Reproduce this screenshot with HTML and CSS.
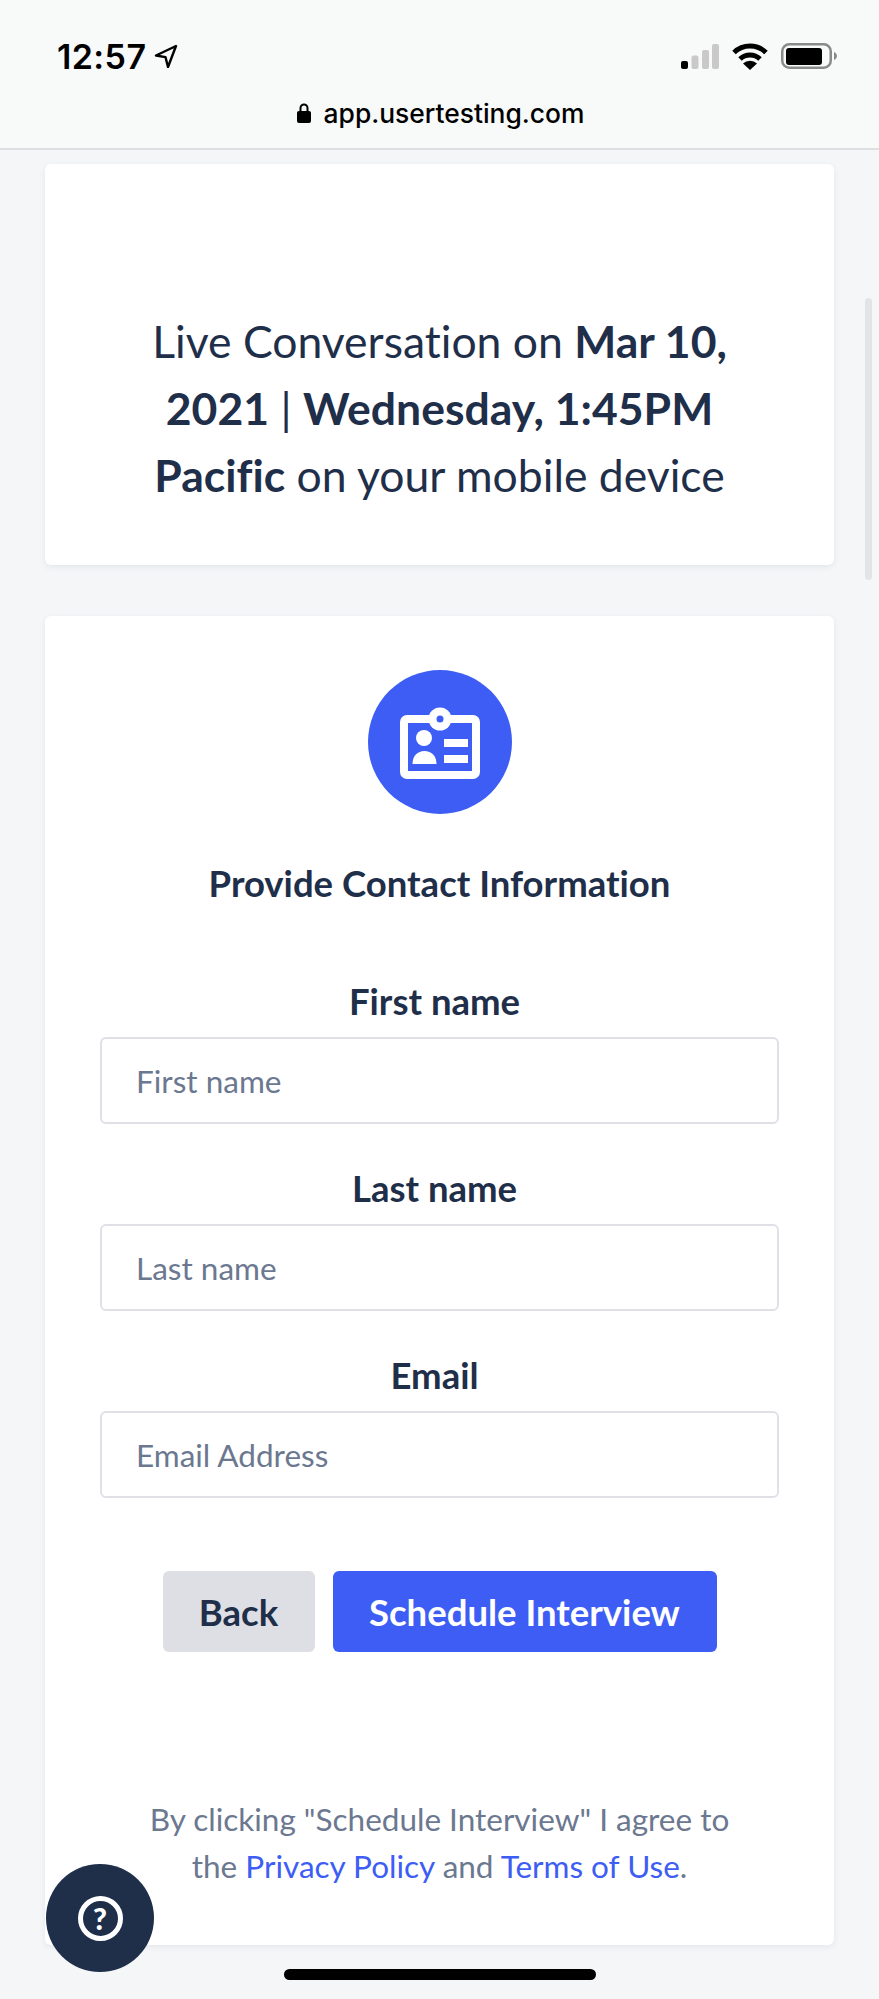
FILE: index.html
```html
<!DOCTYPE html>
<html lang="en">
<head>
    <meta charset="UTF-8">
    <meta name="viewport" content="width=device-width, initial-scale=1.0">
    <title>Schedule Interview</title>
    <link rel="stylesheet" href="styles.css">
</head>
<body>
    <!-- Status bar and address -->
    <header class="top-bar">
        <div class="status-row">
            <div class="status-time">
                <span>12:57</span>
                <svg class="location-icon" viewBox="0 0 24 24" width="24" height="24">
                    <path d="M22 2 2 11.5l9.5 1.6L14 23Z" fill="none" stroke="#000" stroke-width="2.4" stroke-linejoin="round"/>
                </svg>
            </div>
            <div class="status-icons">
                <svg viewBox="0 0 38 25" width="38" height="25">
                    <rect x="0" y="17" width="7" height="8" rx="2" fill="#000"/>
                    <rect x="10.5" y="11.5" width="7" height="13.5" rx="2" fill="#c9c9c9"/>
                    <rect x="21" y="6" width="7" height="19" rx="2" fill="#c9c9c9"/>
                    <rect x="31" y="0" width="7" height="25" rx="2" fill="#c9c9c9"/>
                </svg>
                <svg viewBox="0 0 36 27" width="36" height="27">
                    <path d="M2 9.5a23 23 0 0 1 32 0M8 16a14.500 14.500 0 0 1 20 0" fill="none" stroke="#000" stroke-width="5"/>
                    <path d="M18 27 11 20.500a10 10 0 0 1 14 0Z" fill="#000"/>
                </svg>
                <svg viewBox="0 0 56 26" width="56" height="26">
                    <rect x="1.250" y="1.250" width="48.500" height="23.500" rx="7" fill="none" stroke="#8a8a8a" stroke-width="2.500"/>
                    <rect x="5" y="5" width="36" height="17" rx="3" fill="#000"/>
                    <path d="M53 9c2 1 3 2.500 3 4s-1 3-3 4Z" fill="#8a8a8a"/>
                </svg>
            </div>
        </div>
        <div class="url-row">
            <svg viewBox="0 0 14 20" width="14" height="20">
                <path d="M3.500 8V5a3.500 3.500 0 0 1 7 0v3" fill="none" stroke="#000" stroke-width="2"/>
                <rect x="0" y="8" width="14" height="12" rx="2" fill="#000"/>
            </svg>
            <span>app.usertesting.com</span>
        </div>
    </header>

    <main class="content">
        <!-- Interview date -->
        <section class="card date-card">
            <p>Live Conversation on <strong>Mar 10, 2021</strong> | <strong>Wednesday, 1:45PM Pacific</strong> on your mobile device</p>
        </section>

        <!-- Contact form -->
        <section class="card form-card">
            <div class="badge">
                <svg viewBox="0 0 144 144" width="144" height="144">
                    <circle cx="72" cy="72" r="72" fill="#3d5df5"/>
                    <rect x="36" y="49" width="72" height="56" rx="3" fill="none" stroke="#fff" stroke-width="8"/>
                    <circle cx="72" cy="49" r="11.500" fill="#fff"/>
                    <circle cx="72" cy="49" r="3.500" fill="#3d5df5"/>
                    <circle cx="56" cy="68" r="8" fill="#fff"/>
                    <path d="M44.500 94c0-8 5-13 12-13s12 5 12 13Z" fill="#fff"/>
                    <rect x="76" y="69" width="24" height="8" fill="#fff"/>
                    <rect x="76" y="85" width="24" height="8" fill="#fff"/>
                </svg>
            </div>
            <h2>Provide Contact Information</h2>

            <form class="contact-form">
                <div class="field">
                    <label for="first-name">First name</label>
                    <input type="text" id="first-name" placeholder="First name">
                </div>
                <div class="field">
                    <label for="last-name">Last name</label>
                    <input type="text" id="last-name" placeholder="Last name">
                </div>
                <div class="field">
                    <label for="email">Email</label>
                    <input type="text" id="email" placeholder="Email Address">
                </div>
                <div class="actions">
                    <button type="button" class="btn btn-back">Back</button>
                    <button type="button" class="btn btn-primary">Schedule Interview</button>
                </div>
            </form>

            <p class="legal">By clicking "Schedule Interview" I agree to the <a href="#">Privacy Policy</a> and <a href="#">Terms of Use</a>.</p>
        </section>
    </main>

    <!-- Floating bits -->
    <div class="scroll-thumb"></div>
    <button type="button" class="help-button"><span>?</span></button>
    <div class="home-bar"></div>
</body>
</html>
```

FILE: styles.css
```css
/* General */
html, body { height: 1999px; overflow: hidden; }
body { margin: 0; position: relative; background-color: #f5f6f8; color: #1f2f4a; font-family: "Lato", "Liberation Sans", sans-serif; font-variant-ligatures: none; }

/* Top bar */
.top-bar { box-sizing: border-box; height: 150px; padding-top: 41px; background-color: #f8f9f9; border-bottom: 2px solid #dedfe0; color: #000; }
.status-row { display: flex; justify-content: space-between; align-items: center; height: 30px; padding: 0 42px 0 57px; }
.status-time { display: flex; align-items: center; gap: 8px; font-family: "Inter", sans-serif; font-size: 34px; font-weight: 600; letter-spacing: 0.4px; }
.status-icons { display: flex; align-items: center; gap: 13px; }
.url-row { display: flex; justify-content: center; align-items: center; gap: 13px; margin-top: 26px; padding-left: 2px; font-family: "Inter", sans-serif; font-size: 26.4px; font-weight: 500; }

/* Cards */
.content { padding: 14px 45px 0 45px; }
.card { background: #fff; border-radius: 6px; box-shadow: 0 2px 6px rgba(31, 47, 74, 0.08); text-align: center; }
.date-card { height: 401px; box-sizing: border-box; padding: 143px 100px 0; margin-bottom: 51px; }
.date-card p { margin: 0; font-size: 44.5px; line-height: 67px; }
.form-card { height: 1329px; box-sizing: border-box; padding-top: 54px; }
.badge { display: flex; justify-content: center; height: 144px; }
.form-card h2 { margin: 47px 0 0; font-size: 36.5px; line-height: 44px; font-weight: 700; }

/* Form */
.contact-form { margin-top: 74px; padding: 0 55px; }
.field { margin-bottom: 42px; }
.field label { display: block; padding-right: 10px; font-size: 36.5px; line-height: 44px; font-weight: 700; margin-bottom: 14px; }
.field input { display: block; width: 100%; height: 87px; box-sizing: border-box; padding: 0 34px; border: 2px solid #dfe1e7; border-radius: 6px; font-family: inherit; font-size: 31.5px; color: #1f2f4a; background: #fff; }
.field input::placeholder { color: #6b7890; opacity: 1; }

/* Buttons */
.actions { display: flex; justify-content: center; gap: 18px; margin-top: 73px; }
.btn { height: 81px; border: none; border-radius: 6px; font-family: inherit; font-size: 36.5px; font-weight: 700; }
.btn-back { width: 152px; background-color: #dddfe4; color: #1f2f4a; }
.btn-primary { width: 384px; background-color: #3d5df5; color: #fff; }

/* Legal text */
.legal { margin: 144px 0 0; padding: 0 95px; font-size: 31.5px; line-height: 47px; color: #6b7890; }
.legal a { color: #3d5df5; text-decoration: none; }

/* Floating */
.scroll-thumb { position: absolute; left: 865px; top: 298px; width: 7px; height: 282px; border-radius: 4px; background-color: #e3e4e6; }
.help-button { position: absolute; left: 46px; top: 1864px; width: 108px; height: 108px; padding: 0; display: flex; align-items: center; justify-content: center; border: none; border-radius: 50%; background-color: #1f2f4a; }
.help-button span { display: block; box-sizing: border-box; width: 45px; height: 45px; border: 5px solid #fff; border-radius: 50%; color: #fff; font-family: "Lato", sans-serif; font-size: 30px; font-weight: 900; line-height: 35px; text-align: center; }
.home-bar { position: absolute; left: 284px; top: 1969px; width: 312px; height: 11px; border-radius: 6px; background-color: #000; }
```
